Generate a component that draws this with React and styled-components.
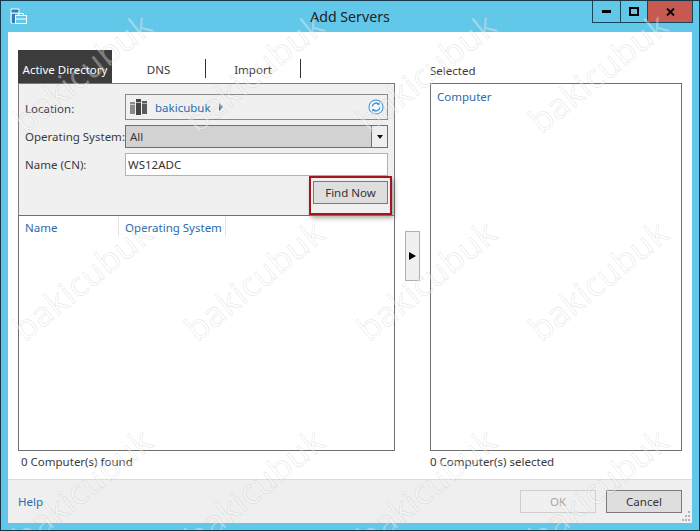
import React from 'react';
import styled, { createGlobalStyle } from 'styled-components';

const GlobalStyle = createGlobalStyle`
  html, body {
    margin: 0;
    padding: 0;
    background: #1d3f4e;
  }

  * {
    box-sizing: border-box;
  }
`;

const Window = styled.div`
  position: relative;
  display: flex;
  flex-direction: column;
  width: 700px;
  height: 531px;
  overflow: hidden;
  border: 1px solid #17384a;
  background: #62c8ea;
  font-family: 'Noto Sans', 'Open Sans', sans-serif;
  font-size: 11.5px;
  color: #3a3a3a;
`;

const TitleBar = styled.header`
  display: grid;
  grid-template-columns: 1fr auto 1fr;
  flex-shrink: 0;
  height: 31px;
`;

const AppIcon = styled.svg`
  width: 18px;
  height: 17px;
  margin: 7px 0 0 9px;
`;

const Title = styled.h1`
  margin: 0;
  padding-top: 5px;
  font-size: 14.2px;
  font-weight: 400;
  line-height: 22px;
  color: #222;
`;

const Controls = styled.div`
  display: flex;
  justify-self: end;
  height: 22px;
  margin-right: 6px;
  border: 1px solid #17455a;
  border-top: 0;
`;

const ControlButton = styled.div`
  display: flex;
  align-items: center;
  justify-content: center;
  width: ${({ $w }) => $w}px;
  border-left: ${({ $first }) => ($first ? '0' : '1px solid #17455a')};
  background: ${({ $close }) => ($close ? '#c75a50' : 'transparent')};
`;

const Body = styled.div`
  display: flex;
  flex-direction: column;
  flex: 1;
  margin: 0 7px 7px;
  background: #fff;
`;

const Main = styled.main`
  display: flex;
  flex: 1;
  min-height: 0;
  padding: 18px 10px 0;
`;

const LeftColumn = styled.section`
  display: flex;
  flex-direction: column;
  width: 377px;
`;

const Tabs = styled.nav`
  display: flex;
  align-items: flex-end;
  flex-shrink: 0;
  height: 33px;
`;

const Tab = styled.div`
  display: flex;
  align-items: center;
  justify-content: center;
  width: ${({ $w }) => $w}px;
  height: 33px;
  padding-top: 6px;
  background: ${({ $active }) => ($active ? '#3c3c3c' : 'transparent')};
  color: ${({ $active }) => ($active ? '#fff' : '#3a3a3a')};
`;

const TabDivider = styled.span`
  width: 1px;
  height: 19px;
  margin-bottom: 5px;
  background: #333;
`;

const SearchPanel = styled.div`
  display: grid;
  grid-template-columns: 100px 1fr;
  grid-template-rows: 26px 23px 23px auto;
  row-gap: 5px;
  flex-shrink: 0;
  height: 132px;
  padding: 10px 6px 0 6px;
  border: 1px solid #7c7c7c;
  border-bottom: 0;
  background: #f0f0f0;
`;

const FieldLabel = styled.label`
  align-self: center;
  padding-top: ${({ $nudge }) => ($nudge ? 2 : 0)}px;
  white-space: nowrap;
`;

const LocationBox = styled.div`
  display: flex;
  align-items: center;
  padding: 0 3px 0 4px;
  border: 1px solid #8a8a8a;
  background: #f0f0f0;
`;

const LocationLink = styled.span`
  margin-left: 8px;
  color: #2a6cad;
`;

const Caret = styled.span`
  width: 0;
  height: 0;
  margin-left: 8px;
  border-top: 4px solid transparent;
  border-bottom: 4px solid transparent;
  border-left: 4px solid #2a6cad;
`;

const RefreshIcon = styled.svg`
  width: 16px;
  height: 16px;
  margin-left: auto;
`;

const Select = styled.div`
  display: flex;
  align-items: center;
  padding-left: 4px;
  border: 1px solid #6f6f6f;
  background: #d2d2d2;
`;

const SelectArrow = styled.span`
  display: flex;
  align-items: center;
  justify-content: center;
  align-self: stretch;
  width: 16px;
  margin-left: auto;
  border-left: 1px solid #6f6f6f;
  background: #efefef;

  &::before {
    content: '';
    border-top: 4px solid #111;
    border-left: 3.5px solid transparent;
    border-right: 3.5px solid transparent;
  }
`;

const TextInput = styled.div`
  display: flex;
  align-items: center;
  padding-left: 2px;
  border: 1px solid #b2b2b2;
  background: #fff;
  color: #333;
`;

const Highlight = styled.div`
  grid-column: 2;
  justify-self: end;
  margin: -5px -4px 0 0;
  padding: 3px 2px 4px;
  border: 2px solid #a3161f;
  box-shadow: 2px 3px 5px rgba(0, 0, 0, 0.35);
`;

const Button = styled.div`
  display: flex;
  align-items: center;
  justify-content: center;
  width: ${({ $w }) => $w || 76}px;
  height: 23px;
  border: 1px solid ${({ $disabled }) => ($disabled ? '#cfcfcf' : '#7a7a7a')};
  background: ${({ $disabled }) => ($disabled ? '#f0f0f0' : '#dedede')};
  color: ${({ $disabled }) => ($disabled ? '#a8a8a8' : '#333')};
`;

const ResultTable = styled.div`
  flex: 1;
  border: 1px solid #6f6f6f;
`;

const TableHead = styled.div`
  display: flex;
`;

const HeadCell = styled.div`
  width: ${({ $w }) => $w}px;
  height: 20px;
  padding: 4px 0 0 6px;
  border-right: 1px solid #e4e4e4;
  line-height: 16px;
  color: #2a6cad;
`;

const CountText = styled.div`
  flex-shrink: 0;
  height: 28px;
  padding: 3px 0 0 ${({ $pad }) => $pad}px;
  line-height: 16px;
`;

const MoveColumn = styled.div`
  flex-shrink: 0;
  width: 35px;
  padding: 181px 0 0 10px;
`;

const MoveButton = styled.div`
  display: flex;
  align-items: center;
  justify-content: center;
  width: 15px;
  height: 50px;
  border: 1px solid #b0b0b0;
  background: #f0f0f0;

  &::before {
    content: '';
    border-left: 7px solid #000;
    border-top: 4px solid transparent;
    border-bottom: 4px solid transparent;
  }
`;

const RightColumn = styled.section`
  display: flex;
  flex-direction: column;
  flex: 1;
`;

const SelectedLabel = styled.div`
  flex-shrink: 0;
  height: 33px;
  padding-top: 13px;
  line-height: 16px;
`;

const SelectedList = styled.div`
  flex: 1;
  padding: 5px 6px;
  border: 1px solid #6f6f6f;
  line-height: 16px;
  color: #2a6cad;
`;

const Footer = styled.footer`
  position: relative;
  display: flex;
  align-items: center;
  flex-shrink: 0;
  gap: 10px;
  height: 44px;
  padding: 0 10px;
  border-top: 1px solid #dcdcdc;
  background: #efefef;
`;

const HelpLink = styled.span`
  margin-right: auto;
  color: #2a6cad;
`;

const Grip = styled.svg`
  position: absolute;
  right: 1px;
  bottom: 1px;
  width: 12px;
  height: 12px;
`;

const WatermarkLayer = styled.div`
  position: absolute;
  top: -33px;
  left: -5px;
  display: grid;
  grid-template-columns: repeat(4, 172px);
  grid-auto-rows: 208px;
  pointer-events: none;
`;

const Watermark = styled.span`
  display: flex;
  align-items: center;
  justify-content: center;
  font-family: 'Open Sans', 'Noto Sans', sans-serif;
  font-size: 34px;
  letter-spacing: 0.5px;
  color: rgba(255, 255, 255, 0.35);
  -webkit-text-stroke: 0.6px rgba(110, 110, 110, 0.2);
  transform: rotate(-39deg);
`;

const TowerIcon = () => (
  <svg width="17" height="16" viewBox="0 0 17 16">
    <rect x="0" y="3" width="5" height="12" fill="#8a8a8a" />
    <rect x="6" y="0" width="5" height="16" fill="#444" />
    <rect x="12" y="2" width="5" height="13" fill="#5a5a5a" />
    <rect x="6" y="3" width="5" height="1" fill="#bbb" />
    <rect x="12" y="4" width="5" height="1" fill="#aaa" />
    <rect x="0" y="5" width="5" height="1" fill="#ccc" />
  </svg>
);

const watermarks = Array.from({ length: 12 }, (_, i) => i);

export default function App() {
  return (
    <Window>
      <GlobalStyle />
      <TitleBar>
        <AppIcon viewBox="0 0 18 17">
          <path d="M1 1h8v4H1z" fill="#2f7fb5" stroke="#fff" />
          <path d="M1 5v10h4M9 5v1" fill="none" stroke="#fff" />
          <rect x="5.5" y="7.5" width="11" height="8" fill="#62c8ea" stroke="#fff" />
          <path d="M8.5 7.5V5.5h5v2M5.5 11h11" fill="none" stroke="#fff" />
          <path d="M2 6h3v9H2z" fill="#2f7fb5" />
        </AppIcon>
        <Title>Add Servers</Title>
        <Controls>
          <ControlButton $w={27} $first>
            <svg width="10" height="3"><rect width="9" height="3" fill="#000" /></svg>
          </ControlButton>
          <ControlButton $w={27}>
            <svg width="11" height="9"><rect x="1" y="1" width="8" height="7" fill="none" stroke="#000" strokeWidth="2" /></svg>
          </ControlButton>
          <ControlButton $w={45} $close>
            <svg width="9" height="8"><path d="M1 0.5l7 7M8 0.5l-7 7" stroke="#000" strokeWidth="2" fill="none" /></svg>
          </ControlButton>
        </Controls>
      </TitleBar>
      <Body>
        <Main>
          <LeftColumn>
            <Tabs>
              <Tab $w={94} $active>Active Directory</Tab>
              <Tab $w={93}>DNS</Tab>
              <TabDivider />
              <Tab $w={94}>Import</Tab>
              <TabDivider />
            </Tabs>
            <SearchPanel>
              <FieldLabel $nudge>Location:</FieldLabel>
              <LocationBox>
                <TowerIcon />
                <LocationLink>bakicubuk</LocationLink>
                <Caret />
                <RefreshIcon viewBox="0 0 17 17">
                  <circle cx="8.5" cy="8.5" r="7.5" fill="#f4f8fc" stroke="#3b8fd0" strokeWidth="1.1" />
                  <path d="M4.5 8a4 4 0 0 1 7-2.3M12.5 9a4 4 0 0 1-7 2.3" fill="none" stroke="#3b8fd0" strokeWidth="1.4" />
                  <path d="M12.5 3.5v3h-3zM4.5 13.5v-3h3z" fill="#3b8fd0" />
                </RefreshIcon>
              </LocationBox>
              <FieldLabel>Operating System:</FieldLabel>
              <Select>
                All
                <SelectArrow />
              </Select>
              <FieldLabel>Name (CN):</FieldLabel>
              <TextInput>WS12ADC</TextInput>
              <Highlight>
                <Button $w={75}>Find Now</Button>
              </Highlight>
            </SearchPanel>
            <ResultTable>
              <TableHead>
                <HeadCell $w={100}>Name</HeadCell>
                <HeadCell $w={107}>Operating System</HeadCell>
              </TableHead>
            </ResultTable>
            <CountText $pad={3}>0 Computer(s) found</CountText>
          </LeftColumn>
          <MoveColumn>
            <MoveButton />
          </MoveColumn>
          <RightColumn>
            <SelectedLabel>Selected</SelectedLabel>
            <SelectedList>Computer</SelectedList>
            <CountText $pad={0}>0 Computer(s) selected</CountText>
          </RightColumn>
        </Main>
        <Footer>
          <HelpLink>Help</HelpLink>
          <Button $disabled>OK</Button>
          <Button>Cancel</Button>
          <Grip viewBox="0 0 12 12">
            <path d="M9 1h2v2H9zM6 5h2v2H6zM9 5h2v2H9zM3 9h2v2H3zM6 9h2v2H6zM9 9h2v2H9z" fill="#b5b5b5" />
          </Grip>
        </Footer>
      </Body>
      <WatermarkLayer>
        {watermarks.map(i => (
          <Watermark key={i}>bakicubuk</Watermark>
        ))}
      </WatermarkLayer>
    </Window>
  );
}
